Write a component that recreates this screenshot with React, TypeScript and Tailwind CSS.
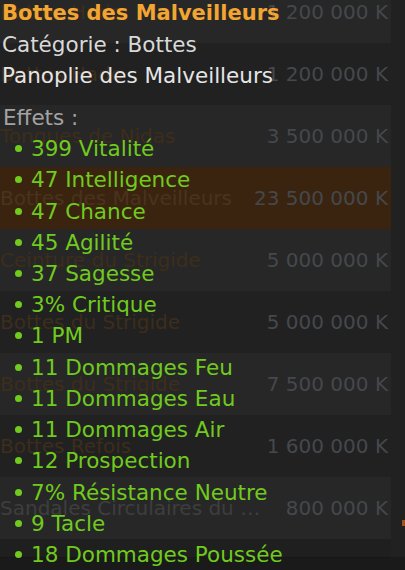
const listRows = [
  { name: 'Bottes Hado', price: '1 200 000 K' },
  { name: 'Bottes Hado', price: '1 200 000 K' },
  { name: 'Tongues de Nidas', price: '3 500 000 K' },
  { name: 'Bottes des Malveilleurs', price: '23 500 000 K', active: true },
  { name: 'Ceinture du Strigide', price: '5 000 000 K' },
  { name: 'Bottes du Strigide', price: '5 000 000 K' },
  { name: 'Bottes du Strigide', price: '7 500 000 K' },
  { name: 'Bottes Refois', price: '1 600 000 K' },
  { name: 'Sandales Circulaires du …', price: '800 000 K', common: true },
];

const effects = [
  '399 Vitalité',
  '47 Intelligence',
  '47 Chance',
  '45 Agilité',
  '37 Sagesse',
  '3% Critique',
  '1 PM',
  '11 Dommages Feu',
  '11 Dommages Eau',
  '11 Dommages Air',
  '12 Prospection',
  '7% Résistance Neutre',
  '9 Tacle',
  '18 Dommages Poussée',
];

const App = (): JSX.Element => {
  return (
    <div className="relative h-[570px] w-[405px] overflow-hidden bg-[#202020] font-['DejaVu_Sans',sans-serif]">
      {/* shop list behind the tooltip */}
      <div className="flex h-full">
        <div className="flex w-[391px] flex-col">
          <div className="mt-[-19px] flex flex-col">
            {listRows.map((row, i) => {
              const bg = row.active ? 'bg-[#3a2410]' : i % 2 === 0 ? 'bg-[#272727]' : 'bg-[#212121]';
              const nameColor = row.active
                ? 'text-[#4a331d]'
                : row.common
                  ? 'text-[#3e3e3e]'
                  : 'text-[#3d2d1b]';
              return (
                <div key={i} className={`flex h-[62px] items-center justify-between pr-[3px] text-[20px] ${bg}`}>
                  <span className={`whitespace-nowrap ${nameColor}`}>{row.name}</span>
                  <span className="whitespace-nowrap text-[#45484c]">{row.price}</span>
                </div>
              );
            })}
          </div>
          <div className="h-[18px] bg-[#1f1f1f]" />
          <div className="flex-1 border-t border-[#171717] bg-[#1a1a1a]" />
        </div>
        <div className="flex w-[14px] flex-col bg-[#212121]">
          <div className="flex flex-1 justify-end">
            <div className="mt-[520px] h-[6px] w-[3px] bg-[#a3521a]" />
          </div>
          <div className="h-[13px] bg-[#1a1a1a]" />
        </div>
      </div>

      {/* item tooltip */}
      <div className="pointer-events-none absolute left-0 top-[-2px] flex flex-col pl-[2px] text-[21.5px] leading-[31px]">
        <div className="whitespace-nowrap text-[21px] font-bold text-[#f2a531]">Bottes des Malveilleurs</div>
        <div className="whitespace-nowrap text-[#d9d9d9]">Catégorie : Bottes</div>
        <div className="whitespace-nowrap text-[#e6e6e6]">Panoplie des Malveilleurs</div>
        <div className="mt-[11px] whitespace-nowrap pl-[1px] text-[#a3a3a3]">Effets :</div>
        <ul className="flex flex-col">
          {effects.map((effect) => (
            <li key={effect} className="flex h-[31.23px] items-center whitespace-nowrap text-[#70cb1e]">
              <span className="ml-[13px] h-[7px] w-[7px] shrink-0 rounded-full bg-[#70cb1e]" />
              <span className="ml-[9px]">{effect}</span>
            </li>
          ))}
        </ul>
      </div>
    </div>
  );
};

export default App;
